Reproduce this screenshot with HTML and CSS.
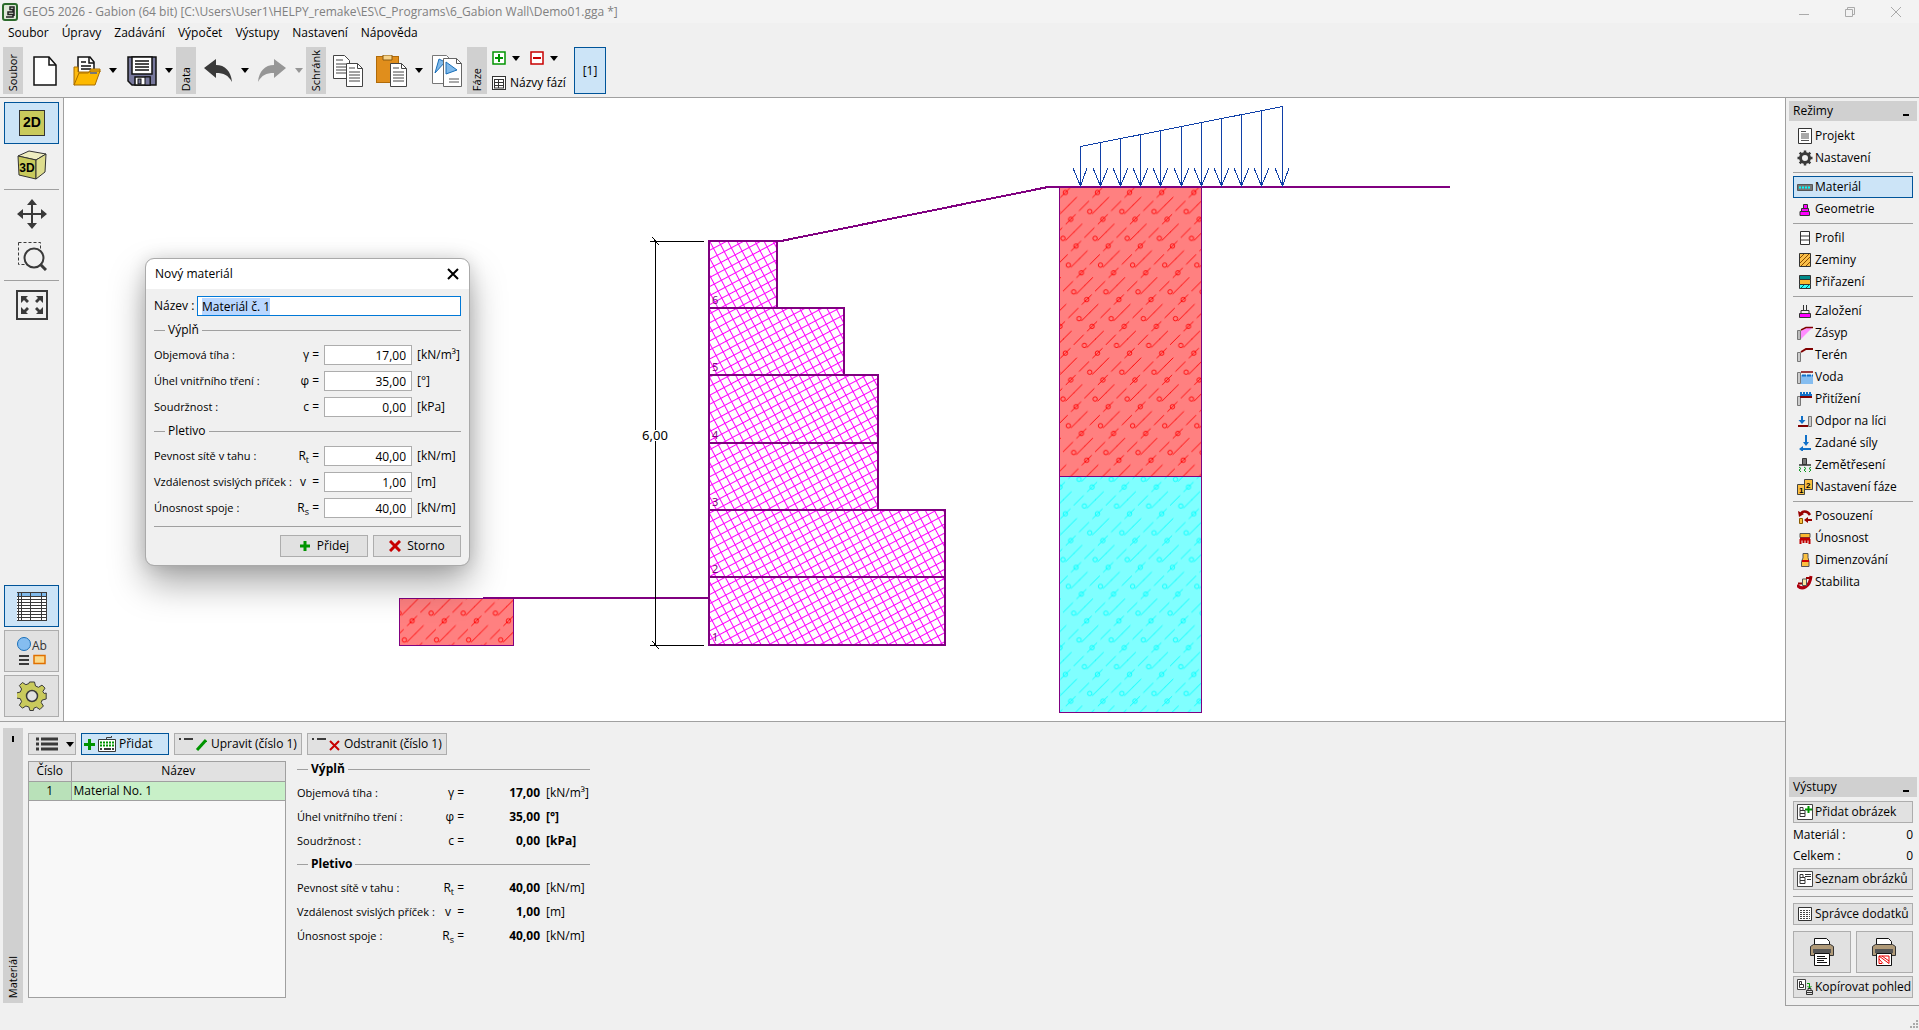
FILE: index.html
```html
<!DOCTYPE html>
<html lang="cs">
<head>
<meta charset="utf-8">
<title>GEO5 2026 - Gabion</title>
<link rel="stylesheet" href="styles.css">
</head>
<body>
<div class="app">
<header class="top">
  <div class="titlebar">
    <svg class="app-icon" width="16" height="18" viewBox="0 0 16 18"><rect x="1" y="1" width="14" height="16" rx="2" fill="#dfe8d8" stroke="#2c6b2c" stroke-width="2"/><path d="M4 14h7v-2.500h-5v-2.500h5v-2.500h-3v-2.500h4v9" fill="none" stroke="#222" stroke-width="1.500"/></svg>
    <span class="title">GEO5 2026 - Gabion (64 bit) [C:\Users\User1\HELPY_remake\ES\C_Programs\6_Gabion Wall\Demo01.gga *]</span>
    <div class="win-controls">
      <button type="button" aria-label="Minimalizovat"><svg width="12" height="12"><path d="M1 8.500h10" stroke="#aaa" fill="none"/></svg></button>
      <button type="button" aria-label="Obnovit"><svg width="12" height="12"><path d="M1.500 3.500h7v7h-7zM3.500 3v-1.500h7v7h-1.500" stroke="#aaa" fill="none"/></svg></button>
      <button type="button" aria-label="Zavřít"><svg width="12" height="12"><path d="M1 1l10 10M11 1l-10 10" stroke="#aaa" fill="none"/></svg></button>
    </div>
  </div>
  <nav class="menu">
    <button type="button">Soubor</button><button type="button">Úpravy</button><button type="button">Zadávání</button><button type="button">Výpočet</button><button type="button">Výstupy</button><button type="button">Nastavení</button><button type="button">Nápověda</button>
  </nav>
  <div class="toolbar">
    <span class="vtab"><span>Soubor</span></span>
    <div class="tools tools-file">
      <button type="button" aria-label="Nový"><svg width="24" height="30" viewBox="0 0 24 30"><path d="M1 1h15l7 8v20H1z" fill="#fff" stroke="#111" stroke-width="1.500"/><path d="M16 1v8h7" fill="none" stroke="#111" stroke-width="1.500"/></svg></button>
      <button type="button" aria-label="Otevřít"><svg width="28" height="30" viewBox="0 0 28 30"><path d="M5 18V1h12l4 5v12" fill="#fff" stroke="#111" stroke-width="1.500"/><path d="M16 1v6h5M8 6h5M8 10h10M8 13h10" fill="none" stroke="#111" stroke-width="1.500"/><path d="M1 29V11h4v5h11l2-3h9v3z" fill="#fdbb11" stroke="#a86c00"/><path d="M1 29l5-12h9l3-2h9l-5 14z" fill="#fdb900" stroke="#a86c00"/><path d="M17 17h7" stroke="#777" stroke-width="2"/></svg></button>
      <button type="button" class="drop" aria-label="Otevřít poslední"><svg width="8" height="5"><path d="M0 0h8l-4 5z"/></svg></button>
      <button type="button" aria-label="Uložit"><svg width="30" height="30" viewBox="0 0 30 30"><path d="M1 1h28v28H5l-4-4z" fill="#77789c" stroke="#111" stroke-width="1.500"/><path d="M5 1h20v17H5zM8 29v-8h15v8z" fill="#fff" stroke="#111" stroke-width="1.500"/><path d="M8 5h14M8 8h14M8 11h14M8 14h14" stroke="#111" stroke-width="1.300"/><rect x="18" y="21" width="5" height="8" fill="#77789c" stroke="#111"/><rect x="11" y="23" width="3" height="5" fill="#77789c" stroke="#111"/></svg></button>
      <button type="button" class="drop" aria-label="Uložit jako"><svg width="8" height="5"><path d="M0 0h8l-4 5z"/></svg></button>
    </div>
    <span class="vtab"><span>Data</span></span>
    <div class="tools tools-data">
      <button type="button" aria-label="Zpět"><svg width="28" height="24" viewBox="0 0 28 24"><path d="M0 9L12 0v6c9 0 15 6 16 17c-4-7-8-9-16-9v5z" fill="#3a3a3a"/></svg></button>
      <button type="button" class="drop" aria-label="Historie zpět"><svg width="8" height="5"><path d="M0 0h8l-4 5z"/></svg></button>
      <button type="button" aria-label="Znovu"><svg width="28" height="24" viewBox="0 0 28 24"><path d="M28 9L16 0v6C7 6 1 12 0 23c4-7 8-9 16-9v5z" fill="#969696"/></svg></button>
      <button type="button" class="drop" aria-label="Historie znovu"><svg width="8" height="5"><path d="M0 0h8l-4 5z" fill="#969696"/></svg></button>
    </div>
    <span class="vtab"><span>Schránk</span></span>
    <div class="tools tools-clip">
      <button type="button" aria-label="Kopírovat"><svg width="30" height="32" viewBox="0 0 30 32" fill="#fff" stroke="#444"><path d="M.5.500h11l5 5v18h-16z"/><path d="M3 5h7M3 9h10M3 12h10M3 15h10M3 18h10"/><path d="M13.500 8.500h11l5 5v18h-16z"/><path d="M24.500 8.500v5h5M16 13h6M16 17h11M16 20h11M16 23h11M16 26h11" fill="none"/></svg></button>
      <button type="button" aria-label="Vložit"><svg width="31" height="32" viewBox="0 0 31 32"><rect x=".5" y="1.500" width="22" height="26" fill="#e08e1c" stroke="#b06a08"/><path d="M7 0h9v5H7z" fill="#f5d28a" stroke="#8a5a10"/><path d="M14.500 8.500h11l5 5v18h-16z" fill="#fff" stroke="#444"/><path d="M25.500 8.500v5h5M17 13h6M17 17h11M17 20h11M17 23h11M17 26h11" fill="none" stroke="#444"/></svg></button>
      <button type="button" class="drop" aria-label="Možnosti vložení"><svg width="8" height="5"><path d="M0 0h8l-4 5z"/></svg></button>
      <button type="button" aria-label="Kopírovat geometrii"><svg width="30" height="32" viewBox="0 0 30 32"><path d="M.5.500h14l4 4v24h-18z" fill="#fff" stroke="#777"/><path d="M3 18l4-14 6 3z" fill="#7fb9ea" stroke="#1a6fb8"/><path d="M11.500 3.500h13l5 5v23h-18z" fill="#fff" stroke="#666"/><path d="M14 7l11 8-11 4z" fill="#7fb9ea" stroke="#1a6fb8"/><path d="M24.500 3.500v5h5M17 24h10M17 27h10" fill="none" stroke="#555"/></svg></button>
    </div>
    <span class="vtab"><span>Fáze</span></span>
    <div class="phase">
      <div class="phase-row">
        <button type="button" aria-label="Přidat fázi"><svg width="14" height="14"><rect x="1" y="1" width="12" height="12" fill="#fff" stroke="#009400" stroke-width="1.500"/><path d="M3 7h8M7 3v8" stroke="#009400" stroke-width="2"/></svg></button>
        <button type="button" class="drop" aria-label="Možnosti přidání"><svg width="8" height="5"><path d="M0 0h8l-4 5z"/></svg></button>
        <button type="button" class="minus" aria-label="Odebrat fázi"><svg width="14" height="14"><rect x="1" y="1" width="12" height="12" fill="#fff" stroke="#c80000" stroke-width="1.500"/><path d="M3 7h8" stroke="#c80000" stroke-width="2"/></svg></button>
        <button type="button" class="drop" aria-label="Možnosti odebrání"><svg width="8" height="5"><path d="M0 0h8l-4 5z"/></svg></button>
      </div>
      <button type="button" class="phase-names"><svg width="14" height="14" fill="none" stroke="#333"><rect x=".5" y=".5" width="13" height="13" fill="#fff"/><path d="M2 3.500h10M2 6.500h10M2 9.500h10M2.500 3v9M6.500 3v9M11.500 3v9M2 12h10"/></svg>Názvy fází</button>
    </div>
    <button type="button" class="phase-tab">[1]</button>
  </div>
</header>

<div class="body">
<div class="work">
  <div class="upper">
    <aside class="side">
      <button type="button" class="big on" aria-label="2D"><svg width="28" height="28"><rect x="1.500" y="1.500" width="25" height="25" fill="#c9ca5c" stroke="#333"/><text x="14" y="18" text-anchor="middle" class="t2d">2D</text></svg></button>
      <button type="button" class="big flat" aria-label="3D"><svg width="30" height="30" viewBox="0 0 30 30" stroke="#333" stroke-linejoin="round"><path d="M1 6L12 1l17 3-10 6z" fill="#eeedc0"/><path d="M1 6l18 4v19L2 25z" fill="#c9ca5c"/><path d="M19 10l10-6-1 18-9 7z" fill="#dedd8e"/><text x="10" y="22" text-anchor="middle" class="t3d">3D</text></svg></button>
      <hr>
      <button type="button" class="big flat" aria-label="Posun"><svg width="30" height="30" fill="#3a3a3a"><path d="M14 5h2v9h9v2h-9v9h-2v-9H5v-2h9z"/><path d="M15 0l5 6H10zM15 30l5-6H10zM0 15l6-5v10zM30 15l-6-5v10z"/></svg></button>
      <button type="button" class="big flat" aria-label="Lupa"><svg width="30" height="30" fill="none" stroke="#3a3a3a"><path d="M1.500 1.500h22v22h-22z" stroke-dasharray="3 2"/><circle cx="17" cy="17" r="9.500" fill="#f0f0f0" stroke-width="2"/><path d="M23 23l6 6" stroke-width="3"/></svg></button>
      <hr>
      <button type="button" class="big flat" aria-label="Přizpůsobit"><svg width="32" height="30"><path d="M1 1h30v28H1z" fill="none" stroke="#3a3a3a" stroke-width="2"/><path d="M5 6h7l-2 2 3 3-2 2-3-3-3 3zM27 6h-7l2 2-3 3 2 2 3-3 3 3zM5 24h7l-2-2 3-3-2-2-3 3-3-3zM27 24h-7l2-2-3-3 2-2 3 3 3-3z" fill="#3a3a3a"/></svg></button>
      <span class="spring"></span>
      <button type="button" class="big on" aria-label="Tabulka"><svg width="30" height="29" shape-rendering="crispEdges"><path d="M0 0h30v29H0z" fill="#fff"/><path d="M0 0h30v4H0z" fill="#7fb9ea"/><path d="M1 0v29M4.500 0v29M13.500 0v29M24.500 0v29M29 0v29M0 .5h30M0 4.500h30M0 7.500h30M0 10.500h30M0 13.500h30M0 16.500h30M0 19.500h30M0 22.500h30M0 25.500h30M0 28.500h30" stroke="#3a3a3a" fill="none"/></svg></button>
      <button type="button" class="big" aria-label="Popisy"><svg width="32" height="28"><circle cx="8" cy="7" r="6.500" fill="#85bdf0" stroke="#1a6fb8"/><path d="M3 19h10M3 23h10M3 27h10" stroke="#3a3a3a" stroke-width="2"/><path d="M18 18.500h11v8H18z" fill="#fbd98a" stroke="#e07000" stroke-width="1.500"/><text x="16" y="13" class="tab">Ab</text></svg></button>
      <button type="button" class="big" aria-label="Nastavení kreslení"><svg width="30" height="30" viewBox="-15 -15 30 30"><path d="M-2.500-14h5l1 4 3 1.300 3.500-2.200 3 3-2.200 3.500L12.200-2.500l2-.500v6l-4 1-1 2.500 2.200 3.500-3.500 3.500-3.500-2.300-2.500 1-.5 2.300h-3.500l-1-3.500-3-1-3.500 2.200-3-3 2.200-3.500-1.300-3-4-.700v-5l4-1 1.300-3-2.200-3.500 3-3 3.500 2.200 3-1.200z" fill="#c9ca5c" stroke="#3a3a3a"/><circle r="5.500" fill="#e1e1e1" stroke="#3a3a3a" stroke-width="1.500"/></svg></button>
    </aside>

    <div class="canvas">
      <svg class="drawing" viewBox="64 98 1721 623" preserveAspectRatio="xMinYMin meet">
        <defs>
          <g id="cell" fill="none" shape-rendering="auto">
            <circle r="2.200"/><circle cx="19" cy="-7.700" r="2.200"/>
            <path d="M-5 5L5-5M8.300-8.300l10-10M11.500 4.500l-8.500 8.500M21.500-5.500l9-9"/>
          </g>
          <g id="cells">
            <use href="#cell"/><use href="#cell" x="5.330" y="26.670"/><use href="#cell" x="10.670" y="53.330"/><use href="#cell" x="16" y="80"/><use href="#cell" x="21.330" y="106.670"/><use href="#cell" x="26.670" y="133.330"/><use href="#cell" x="32" y="160"/><use href="#cell" x="-5.330" y="-26.670"/>
          </g>
          <pattern id="soil-red" width="32" height="160" patternUnits="userSpaceOnUse" patternTransform="translate(1070.700 219.300) scale(1.004)"><g stroke="#f00" stroke-width=".9"><use href="#cells"/><use href="#cells" x="-32"/><use href="#cells" x="32"/></g></pattern>
          <pattern id="soil-cyan" width="32" height="160" patternUnits="userSpaceOnUse" patternTransform="translate(1070.700 219.300) scale(1.004)"><g stroke="#0ff" stroke-width=".9"><use href="#cells"/><use href="#cells" x="-32"/><use href="#cells" x="32"/></g></pattern>
          <pattern id="mesh" width="8" height="8" patternUnits="userSpaceOnUse" patternTransform="translate(709 241) rotate(-28)"><path d="M0 .5h8M.5 0v8" stroke="#f0f" fill="none" shape-rendering="auto"/></pattern>
        </defs>
        <g shape-rendering="crispEdges">
          <path d="M399.500 598.500h114v47h-114z" fill="#ff8080"/>
          <path d="M399.500 598.500h114v47h-114z" fill="url(#soil-red)" stroke="#800080"/>
          <path d="M1059.500 187.500h142v289h-142z" fill="#ff8080"/>
          <path d="M1059.500 187.500h142v289h-142z" fill="url(#soil-red)" stroke="#800080"/>
          <path d="M1059.500 476.500h142v236h-142z" fill="#80ffff"/>
          <path d="M1059.500 476.500h142v236h-142z" fill="url(#soil-cyan)" stroke="#800080"/>
          <g fill="url(#mesh)" stroke="#800080" stroke-width="2">
            <path d="M709 241h68v67h-68zM709 308h135v67H709zM709 375h169v68H709zM709 443h169v67H709zM709 510h236v67H709zM709 577h236v68H709z"/>
          </g>
          <path d="M483 598h226M777 241h4L1048 187h402" fill="none" stroke="#800080" stroke-width="2"/>
          <path d="M650 241.500h54M650 645.500h54M655.500 241v404M652 237l7 8M652 641l7 8" stroke="#000" fill="none"/>
          <path d="M1080.500 187V146.500L1282.500 106.500V187M1100.500 187V142.500M1120.500 187V138.500M1140.500 187V134.500M1160.500 187V130.500M1181.500 187V126.500M1201.500 187V122.500M1221.500 187V118.500M1241.500 187V114.500M1261.500 187V110.500" stroke="#1040a8" fill="none"/>
          <path d="M1073 168l7.500 18 6.500-18M1093 168l7.500 18 7.500-18M1113 168l7.500 18 7.500-18M1133 168l7.500 18 7.500-18M1153 168l7.500 18 7.500-18M1174 168l7.500 18 7.500-18M1194 168l7.500 18 7.500-18M1214 168l7.500 18 7.500-18M1234 168l7.500 18 7.500-18M1254 168l7.500 18 7.500-18M1275 168l7.500 18 6.500-18" stroke="#1040a8" fill="none"/>
        </g>
        <rect x="642" y="430" width="26" height="11" fill="#fff"/>
        <text x="655" y="440" text-anchor="middle" class="dim">6,00</text>
        <g class="blk"><text x="712" y="304">6</text><text x="712" y="371">5</text><text x="712" y="439">4</text><text x="712" y="506">3</text><text x="712" y="573">2</text><text x="712" y="641">1</text></g>
      </svg>

      <form class="dialog" role="dialog" aria-labelledby="dlg-title">
        <div class="dlg-head"><span id="dlg-title">Nový materiál</span><button type="button" aria-label="Zavřít"><svg width="12" height="12"><path d="M1 1l10 10M11 1l-10 10" stroke="#000" stroke-width="2"/></svg></button></div>
        <div class="dlg-body">
          <div class="name-row"><label for="name">Název :</label><input id="name" class="name" type="text" value="Materiál č. 1"></div>
          <h3 class="section">Výplň</h3>
          <div class="field"><label for="f1">Objemová tíha :</label><span class="sym">γ =</span><input id="f1" type="text" value="17,00"><span>[kN/m³]</span></div>
          <div class="field"><label for="f2">Úhel vnitřního tření :</label><span class="sym">φ =</span><input id="f2" type="text" value="35,00"><span>[°]</span></div>
          <div class="field"><label for="f3">Soudržnost :</label><span class="sym">c =</span><input id="f3" type="text" value="0,00"><span>[kPa]</span></div>
          <h3 class="section">Pletivo</h3>
          <div class="field"><label for="f4">Pevnost sítě v tahu :</label><span class="sym">R<sub>t</sub> =</span><input id="f4" type="text" value="40,00"><span>[kN/m]</span></div>
          <div class="field"><label for="f5">Vzdálenost svislých příček :</label><span class="sym">v&nbsp; =</span><input id="f5" type="text" value="1,00"><span>[m]</span></div>
          <div class="field"><label for="f6">Únosnost spoje :</label><span class="sym">R<sub>s</sub> =</span><input id="f6" type="text" value="40,00"><span>[kN/m]</span></div>
          <div class="dlg-foot">
            <button type="button" class="btn"><svg width="12" height="12"><path d="M1 6h10M6 1v10" stroke="#009400" stroke-width="3"/></svg>Přidej</button>
            <button type="button" class="btn"><svg width="12" height="12"><path d="M1 1l10 10M11 1L1 11" stroke="#c80000" stroke-width="3"/></svg>Storno</button>
          </div>
        </div>
      </form>
    </div>
  </div>

  <section class="bottom">
    <div class="frame-tab"><i></i><span>Materiál</span></div>
    <div class="frame">
      <div class="actions">
        <button type="button" class="btn list" aria-label="Seznam"><svg width="22" height="14"><path d="M0 2h3M5 2h17M0 7h3M5 7h17M0 12h3M5 12h17" stroke="#3a3a3a" stroke-width="3"/></svg><svg width="8" height="5"><path d="M0 0h8l-4 5z"/></svg></button>
        <button type="button" class="btn add"><svg width="11" height="11"><path d="M0 5.500h11M5.500 0v11" stroke="#009400" stroke-width="3"/></svg><svg width="18" height="16" fill="none" stroke="#3a3a3a"><path d="M.5 3.500h17v12H.5z" fill="#fff"/><path d="M8.500 3V1.500h5V0"/><path d="M2 6.500h14M2 9.500h14" stroke="#009400" stroke-width="2" stroke-dasharray="2 1"/><path d="M2 13h2M6 13h7M14 13h2" stroke-width="2"/></svg>Přidat</button>
        <button type="button" class="btn"><svg width="28" height="16"><path d="M0 3h2M5 3h9" stroke="#3a3a3a" stroke-width="2"/><path d="M18 14l9-10" stroke="#009400" stroke-width="3"/></svg>Upravit (číslo 1)</button>
        <button type="button" class="btn"><svg width="28" height="16"><path d="M0 3h2M5 3h9" stroke="#3a3a3a" stroke-width="2"/><path d="M18 5l9 9M27 5l-9 9" stroke="#c80000" stroke-width="2"/></svg>Odstranit (číslo 1)</button>
      </div>
      <div class="data">
        <div class="grid-box">
          <table><thead><tr><th class="num">Číslo</th><th>Název</th></tr></thead><tbody><tr><td class="num">1</td><td>Material No. 1</td></tr></tbody></table>
        </div>
        <div class="summary">
          <h3 class="section bold">Výplň</h3>
          <div class="line"><span>Objemová tíha :</span><span class="sym">γ =</span><b>17,00</b><span>[kN/m³]</span></div>
          <div class="line"><span>Úhel vnitřního tření :</span><span class="sym">φ =</span><b>35,00</b><b class="unit">[°]</b></div>
          <div class="line"><span>Soudržnost :</span><span class="sym">c =</span><b>0,00</b><b class="unit">[kPa]</b></div>
          <h3 class="section bold">Pletivo</h3>
          <div class="line"><span>Pevnost sítě v tahu :</span><span class="sym">R<sub>t</sub> =</span><b>40,00</b><span>[kN/m]</span></div>
          <div class="line"><span>Vzdálenost svislých příček :</span><span class="sym">v&nbsp; =</span><b>1,00</b><span>[m]</span></div>
          <div class="line"><span>Únosnost spoje :</span><span class="sym">R<sub>s</sub> =</span><b>40,00</b><span>[kN/m]</span></div>
        </div>
      </div>
    </div>
  </section>
</div>

<aside class="panel">
  <div class="panel-head"><span>Režimy</span><i></i></div>
  <nav class="modes">
    <button type="button"><svg width="16" height="16"><path d="M1.500.500h13v15h-13z" fill="#fff" stroke="#333"/><path d="M4 3.500h5M4 6h8M4 8h8M4 10h8M4 12.500h8" stroke="#555"/></svg>Projekt</button>
    <button type="button"><svg width="16" height="16" viewBox="-8 -8 16 16"><circle r="4.500" fill="none" stroke="#3a3a3a" stroke-width="3"/><path d="M0-7.500v3M0 7.500v-3M-7.500 0h3M7.500 0h-3M-5.300-5.300l2 2M5.300 5.300l-2-2M-5.300 5.300l2-2M5.300-5.300l-2 2" stroke="#3a3a3a" stroke-width="2.500"/></svg>Nastavení</button>
    <hr>
    <button type="button" class="on"><svg width="16" height="16"><path d="M.5 5.500h15v6H.5z" fill="#777" stroke="#555"/><path d="M2 8.500h12" stroke="#0ff" stroke-width="2" stroke-dasharray="2 1"/></svg>Materiál</button>
    <button type="button"><svg width="16" height="16"><path d="M6.500 3.500h4v4h-4zM4.500 7.500h7v3h-7zM3 10.500h9.500v4H3z" fill="#f0f" stroke="#333"/></svg>Geometrie</button>
    <hr>
    <button type="button"><svg width="16" height="16"><path d="M3.500 1.500h9v13h-9zM3.500 6h9M3.500 10h9" fill="#fff" stroke="#333"/></svg>Profil</button>
    <button type="button"><svg width="16" height="16"><path d="M2.500 1.500h11v13h-11z" fill="#fbc04a" stroke="#333"/><path d="M3 6l4-4M3 11l9-9M4 14l9-9M9 14l4-4" stroke="#8a4b00"/></svg>Zeminy</button>
    <button type="button"><svg width="16" height="16"><path d="M2.500 1.500h11v4h-11z" fill="#008b8b" stroke="#333"/><path d="M2.500 5.500h11v5h-11z" fill="#fbb830" stroke="#333"/><path d="M2.500 10.500h11v4h-11z" fill="#3ff" stroke="#333"/><path d="M4 14l3-3M9 14l3-3" stroke="#066"/></svg>Přiřazení</button>
    <hr>
    <button type="button"><svg width="16" height="16"><path d="M2.500 10.500h11v4h-11z" fill="#f0f" stroke="#333"/><path d="M4 10.500V7.500h8v3M6.500 7.500V2M9.500 7.500V2" fill="none" stroke="#333"/></svg>Založení</button>
    <button type="button"><svg width="16" height="16"><path d="M.5 5.500h3v9h-3z" fill="#bbb" stroke="#777"/><path d="M4 14V6l6-3h5z" fill="#ff8cff"/><path d="M4 5l5-2.500h7" stroke="#800000" stroke-width="1.500" fill="none"/></svg>Zásyp</button>
    <button type="button"><svg width="16" height="16"><path d="M.5 5.500h3v9h-3z" fill="#ccc" stroke="#777"/><path d="M4 5l5-3h7" stroke="#800000" stroke-width="2" fill="none"/></svg>Terén</button>
    <button type="button"><svg width="16" height="16"><path d="M4 6h12v9H4z" fill="#85bdf0"/><path d="M.5 3.500h3v11h-3z" fill="#ccc" stroke="#777"/><path d="M4 3h12" stroke="#800000" stroke-width="1.500"/><path d="M5 6.500h11" stroke="#1070c8" stroke-width="2" stroke-dasharray="4 1"/></svg>Voda</button>
    <button type="button"><svg width="16" height="16"><path d="M.5 5.500h3v9h-3z" fill="#ccc" stroke="#777"/><path d="M3 6h12" stroke="#800000" stroke-width="2"/><path d="M4 1v4M7 1v4M10 1v4M13 1v4M3 4h12" stroke="#1070c8" stroke-width="2"/></svg>Přitížení</button>
    <button type="button"><svg width="16" height="16"><path d="M11.500 3.500h3v10h-3z" fill="#ccc" stroke="#777"/><path d="M1 13h10" stroke="#800000" stroke-width="2"/><path d="M5 3v5" stroke="#1070c8" stroke-width="2"/><path d="M1.500 7h7L5 11z" fill="#1070c8"/></svg>Odpor na líci</button>
    <button type="button"><svg width="16" height="16"><path d="M9 0v8M5 14h9" stroke="#1070c8" stroke-width="2"/><path d="M6 7h6l-3 4zM6 11v6l-4-3z" fill="#1070c8"/></svg>Zadané síly</button>
    <button type="button"><svg width="16" height="16"><path d="M5.500 1.500h4v6h-4z" fill="#777" stroke="#333"/><path d="M2 8h12" stroke="#333" stroke-width="1.500"/><path d="M2 10l2 1.500-2 1.500 2 2M7 10l2 1.500-2 1.500 2 2M14 10l-2 1.500 2 1.500-2 2" stroke="#0a9a20" fill="none"/></svg>Zemětřesení</button>
    <button type="button"><svg width="16" height="16"><path d="M.5 5.500h7v10h-7zM7.500.500h8v10h-8z" fill="#fbc040" stroke="#444"/><text x="2" y="14" class="tiny">1</text><text x="9" y="9" class="tiny">2</text></svg>Nastavení fáze</button>
    <hr>
    <button type="button"><svg width="16" height="16"><path d="M4 6c1-3 6-4 9 1" stroke="#900" stroke-width="2.500" fill="none"/><path d="M1 3l1 6 5-3z" fill="#900"/><path d="M2.500 10.500h3v5h-3z" fill="#fbc040" stroke="#8a5a00"/><path d="M7 12l4-3v2h4v2h-4v2z" fill="#900"/></svg>Posouzení</button>
    <button type="button"><svg width="16" height="16"><path d="M3 3.500h10v4H3z" fill="#fbb830" stroke="#555"/><path d="M3 9h10" stroke="#c00000" stroke-width="3"/><path d="M3.500 9v5M6.500 9v4M9.500 9v4M12.500 9v5" stroke="#c00000" stroke-width="2"/></svg>Únosnost</button>
    <button type="button"><svg width="16" height="16"><path d="M6 1.500h5v4l1 4v5H4.500v-5L6 6z" fill="#fbc040" stroke="#555"/><path d="M5 9h7" stroke="#c00" stroke-width="2"/></svg>Dimenzování</button>
    <button type="button"><svg width="16" height="16"><path d="M0 11c5 6 13 2 14-9" stroke="#b00010" stroke-width="3" fill="none"/><path d="M5.500 11.500V5h4v6.500z" fill="#fbe6a0" stroke="#555"/><path d="M1 9.500h4M9 4h6" stroke="#900" stroke-width="2"/></svg>Stabilita</button>
  </nav>
  <span class="spring"></span>
  <div class="panel-head"><span>Výstupy</span><i></i></div>
  <div class="outputs">
    <button type="button" class="btn"><svg width="16" height="16"><path d="M.5.500h15v15H.5z" fill="#fff" stroke="#444"/><path d="M3 3.500h3v3H3zM3 6.500h5v3H3zM3 9.500h5v3H3z" fill="none" stroke="#333"/><path d="M8 5.500h7M11.500 2v7" stroke="#009400" stroke-width="2"/></svg>Přidat obrázek</button>
    <div class="count"><span>Materiál :</span><span>0</span></div>
    <div class="count"><span>Celkem :</span><span>0</span></div>
    <button type="button" class="btn"><svg width="16" height="16"><path d="M.5.500h15v15H.5z" fill="#fff" stroke="#444"/><path d="M3 3.500h3v3H3zM3 6.500h5v3H3zM3 9.500h5v3H3z" fill="none" stroke="#333"/><path d="M8 3.500h6M8 5.500h6M10 8.500h4" stroke="#333"/></svg>Seznam obrázků</button>
    <hr>
    <button type="button" class="btn"><svg width="16" height="16"><path d="M1.500 1.500h13v13h-13z" fill="#fff" stroke="#333"/><path d="M3 4.500h10M3 6.500h10M3 8.500h10M3 10.500h10M3 12.500h10" stroke="#444" stroke-dasharray="2 1"/></svg>Správce dodatků</button>
    <div class="prints">
      <button type="button" class="btn" aria-label="Tisk zprávy"><svg width="24" height="30" viewBox="0 0 24 30"><path d="M4.500 9V1.500h12l3 3V9" fill="#fff" stroke="#111"/><path d="M.5 9.500l3-2h17l3 2v9H.5z" fill="#b09a78" stroke="#333"/><path d="M3 12h18v4H3z" fill="#555"/><path d="M4.500 16.500h15v12h-15z" fill="#fff" stroke="#111"/><path d="M7 19.500h8M7 21.500h10M7 23.500h7M7 25.500h10" stroke="#111"/></svg></button>
      <button type="button" class="btn" aria-label="Tisk obrázku"><svg width="24" height="30" viewBox="0 0 24 30"><path d="M4.500 9V1.500h12l3 3V9" fill="#fff" stroke="#111"/><path d="M.5 9.500l3-2h17l3 2v9H.5z" fill="#b09a78" stroke="#333"/><path d="M3 12h18v4H3z" fill="#555"/><path d="M4.500 16.500h15v12h-15z" fill="#fff" stroke="#111"/><path d="M7 19h10v7.500L7 19v7.500h3M10 19l7 5M7 22l4 4.500" stroke="#e00" fill="none"/></svg></button>
    </div>
    <button type="button" class="btn"><svg width="16" height="16"><path d="M.5.500h8v10h-8z" fill="#fff" stroke="#444"/><path d="M2.500 2.500h2v3h-2zM2.500 5.500h4v3h-4z" fill="none" stroke="#333"/><path d="M10 4.500h2.500V9M10.500 7l2 2 2-2" stroke="#009400" fill="none"/><path d="M9.500 11.500h6v4h-6zM11 11v-1.500h3V11M9 13.500h7" fill="none" stroke="#333"/></svg>Kopírovat pohled</button>
  </div>
</aside>
</div>
<footer class="status"><svg width="10" height="10" fill="#aaa"><path d="M7 0h2v2H7zM7 3h2v2H7zM7 6h2v2H7zM4 3h2v2H4zM4 6h2v2H4zM1 6h2v2H1z"/></svg></footer>
</div>
<script>
const nameField = document.getElementById('name');
nameField.focus();
nameField.select();
</script>
</body>
</html>
```
FILE: styles.css
```css
* { box-sizing: border-box; }
body { margin: 0; background: #f0f0f0; color: #000; font: 12px/16px "Open Sans", "Noto Sans", sans-serif; }
button, input { font: inherit; color: inherit; }
button { background: none; border: 0; padding: 0; display: flex; align-items: center; justify-content: center; }
svg { display: block; flex: none; }
hr { border: 0; border-top: 1px solid #a0a0a0; margin: 3px 0; width: 100%; }
i { display: block; background: #000; }
.app { min-height: 100vh; display: flex; flex-direction: column; }

/* header */
.top { border-bottom: 1px solid #a0a0a0; padding-bottom: 3px; }
.titlebar { display: flex; align-items: center; height: 23px; background: #f3f3f3; color: #808080; padding-left: 2px; gap: 5px; }
.win-controls { margin-left: auto; display: flex; }
.win-controls button { width: 46px; height: 23px; }
.menu { display: flex; gap: 13px; height: 24px; padding: 0 8px 4px; align-items: center; }
.toolbar { display: flex; height: 47px; padding-left: 3px; }
.vtab { width: 20px; background: #d0d0d0; display: flex; flex-direction: column; align-items: center; justify-content: flex-end; padding-bottom: 3px; font-size: 11px; }
.vtab span { writing-mode: vertical-rl; transform: rotate(180deg); }
.tools { display: flex; align-items: center; }
.tools-file { width: 153px; padding-left: 10px; gap: 8px; }
.tools-file button:nth-child(1) { margin-right: 8px; }
.tools-file button:nth-child(4) { margin-left: 2px; }
.tools-data { width: 110px; padding-left: 8px; gap: 9px; }
.tools-clip { width: 141px; padding-left: 7px; gap: 8px; }
.tools-clip button:nth-child(2) { margin-left: 5px; }
.tools-clip button:nth-child(3) { margin-right: 1px; }
.phase { width: 87px; padding: 4px 0 3px 5px; display: flex; flex-direction: column; justify-content: space-between; }
.phase-row { display: flex; gap: 6px; align-items: center; }
.minus { margin-left: 4px; }
.phase-names { gap: 4px; justify-content: flex-start; white-space: nowrap; }
.phase-tab { width: 32px; background: #cce4f7; border: 1px solid #005499; }

.body { flex: 1; display: flex; }
.work { flex: 1; display: flex; flex-direction: column; min-width: 0; }
.upper { flex: 1; display: flex; }

/* left tool strip */
.side { width: 64px; border-right: 1px solid #a0a0a0; padding: 4px; display: flex; flex-direction: column; }
.big { height: 42px; width: 55px; border: 1px solid #adadad; background: #e1e1e1; margin-bottom: 3px; }
.big:last-child { margin-bottom: 0; }
.big.on { background: #cce4f7; border-color: #005499; }
.big.flat { background: none; border-color: transparent; margin-bottom: 0; }
.side .big.on:first-child { margin-bottom: 0; }
.spring { flex: 1; }
.t2d { font: bold 14px "Liberation Sans", sans-serif; }
.t3d { font: bold 12px "Liberation Sans", sans-serif; stroke: none; }
.tab { font-size: 12px; fill: #333; }
.tiny { font: bold 8px "Liberation Sans", sans-serif; }

/* drawing area */
.canvas { flex: 1; background: #fff; position: relative; overflow: hidden; min-width: 0; }
.drawing { width: 100%; }
.dim { font: 13px "Noto Sans", sans-serif; }
.blk { font: 11px "Noto Sans", sans-serif; fill: #800080; }

/* dialog window */
.dialog { position: absolute; left: 82px; top: 161px; width: 323px; background: #f0f0f0; border-radius: 8px; outline: 1px solid #aaa; box-shadow: 0 18px 36px rgba(0, 0, 0, .35), 0 0 18px rgba(0, 0, 0, .15); overflow: hidden; }
.dlg-head { height: 30px; background: #fff; display: flex; align-items: center; justify-content: space-between; padding: 0 10px 0 9px; }
.dlg-body { padding: 7px 8px 8px; display: flex; flex-direction: column; }
.name-row { display: flex; align-items: center; justify-content: space-between; }
input { height: 20px; width: 88px; border: 1px solid #adadad; background: #fff; text-align: right; padding: 0 5px; outline: 0; }
.name { width: 264px; border-color: #0078d7; text-align: left; padding: 0 4px; }
::selection { background: #b9d7ff; color: #000; }
.section { display: flex; align-items: center; gap: 3px; font-size: 12px; font-weight: 400; margin: 0 0 1px; height: 28px; }
.section::before { content: ""; width: 11px; border-top: 1px solid #a0a0a0; }
.section::after { content: ""; flex: 1; border-top: 1px solid #a0a0a0; }
.field { display: grid; grid-template-columns: 1fr auto 88px 44px; align-items: center; column-gap: 5px; height: 20px; margin-bottom: 6px; white-space: nowrap; }
.field:has(+ .section) { margin-bottom: 0; }
.field label { width: 0; font-size: 11px; }
sub { font-size: 9px; line-height: 0; vertical-align: -3px; }
.dlg-foot { border-top: 1px solid #a0a0a0; margin-top: 2px; padding-top: 8px; display: flex; gap: 5px; justify-content: flex-end; }
.btn { height: 22px; background: #e1e1e1; border: 1px solid #adadad; white-space: nowrap; gap: 6px; }
.dlg-foot .btn { width: 88px; }

/* bottom frame */
.bottom { border-top: 1px solid #a0a0a0; padding: 6px 0 3px 3px; display: flex; gap: 5px; }
.frame-tab { width: 20px; background: #d0d0d0; display: flex; flex-direction: column; align-items: center; justify-content: space-between; padding: 8px 0 5px; }
.frame-tab i { width: 2px; height: 6px; }
.frame-tab span { writing-mode: vertical-rl; transform: rotate(180deg); font-size: 11px; }
.frame { flex: 1; padding: 5px 0; }
.actions { display: flex; gap: 5px; }
.actions .btn { padding: 0 4px; gap: 4px; }
.actions .list { gap: 8px; padding: 0 2px 0 7px; width: 48px; }
.actions .add { background: #cce4f7; border-color: #005499; width: 88px; padding: 0 2px; gap: 3px; justify-content: flex-start; }
.data { display: flex; gap: 11px; margin-top: 6px; }
.grid-box { width: 258px; min-height: 237px; border: 1px solid #a0a0a0; background: #f8f8f8; }
table { border-collapse: collapse; width: 100%; }
th, td { font-weight: 400; padding: 0 2px; height: 19px; border-bottom: 1px solid #a0a0a0; text-align: left; }
th { background: #e1e1e1; text-align: center; }
td { background: #c8f0c8; }
.num { width: 42px; text-align: center; border-right: 1px solid #a0a0a0; }
td.num { background: #b9e1b9; }
.summary { width: 293px; }
.bold { font-weight: 700; height: 16px; margin: 0; }
.line { display: grid; grid-template-columns: 1fr auto 70px 44px; column-gap: 6px; height: 24px; align-items: center; white-space: nowrap; }
.line > span:first-child { width: 0; font-size: 11px; }
.line > b:nth-child(3) { text-align: right; }
.bold + .line { margin-top: 4px; }
.line:has(+ .bold) { margin-bottom: 3px; }

/* right panel */
.panel { width: 134px; border-left: 1px solid #a0a0a0; border-bottom: 1px solid #a0a0a0; padding: 3px 2px 7px 3px; display: flex; flex-direction: column; }
.panel-head { height: 20px; background: #d0d0d0; display: flex; align-items: center; justify-content: space-between; padding: 0 8px 0 4px; }
.panel-head i { width: 6px; height: 2px; margin-top: 8px; }
.modes, .outputs { padding: 4px 4px 0; display: flex; flex-direction: column; }
.modes button { height: 22px; border: 1px solid transparent; justify-content: flex-start; gap: 2px; padding-left: 3px; white-space: nowrap; }
.modes .on { background: #cce4f7; border-color: #005499; }
.outputs > .btn { justify-content: flex-start; gap: 2px; padding-left: 3px; }
.outputs hr { margin: 6px 0; }
.count { display: flex; justify-content: space-between; height: 21px; align-items: center; }
.outputs .btn + .count { margin-top: 1px; }
.count + .btn { margin-top: 2px; }
.prints { display: flex; gap: 5px; margin: 6px 0 3px; }
.prints .btn { flex: 1; height: 42px; }
.status { height: 24px; display: flex; align-items: flex-end; justify-content: flex-end; }
```
